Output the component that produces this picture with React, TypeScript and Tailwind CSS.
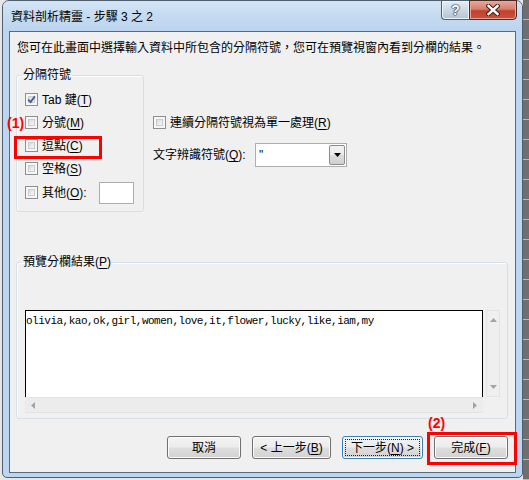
import React from "react";

function Box({ checked = false }: { checked?: boolean }) {
  return (
    <span className="relative flex h-[13px] w-[13px] shrink-0 border border-[#8e8f8f] bg-[#f6f6f6] p-[2px]">
      <span className="h-full w-full border border-[#c9cbcd] bg-gradient-to-br from-[#d9dadc] to-[#f8f8f8]" />
      {checked && (
        <svg className="absolute left-[1px] top-[1px]" width="9" height="9" viewBox="0 0 9 9">
          <path d="M1.2 4.6 L3.6 7 L7.9 1.4" fill="none" stroke="#4b5e9c" strokeWidth="1.9" />
        </svg>
      )}
    </span>
  );
}

function Mn({ text, k, tail = "" }: { text: string; k: string; tail?: string }) {
  return (
    <span>
      {text}(<span className="underline underline-offset-[2px]">{k}</span>){tail}
    </span>
  );
}

function Row({ children, className = "" }: { children: React.ReactNode; className?: string }) {
  return <div className={"relative flex h-[23px] items-center gap-[4px] " + className}>{children}</div>;
}

function Btn({ w, children, focus = false }: { w: string; children: React.ReactNode; focus?: boolean }) {
  return (
    <div
      className={
        "flex h-[23px] rounded-[3px] border bg-[linear-gradient(to_bottom,#f3f3f3_0%,#ececec_48%,#dedede_52%,#d2d2d2_100%)] shadow-[inset_0_0_0_1px_#fbfbfb] " +
        w +
        (focus ? " border-[#3c7fb1] shadow-[inset_0_0_0_1px_#9fe0f9,0_0_2px_#7fd0f5]" : " border-[#707070]")
      }
    >
      {focus ? (
        <div className="m-[2px] flex flex-1 items-center justify-center border border-dotted border-[#222]">{children}</div>
      ) : (
        <div className="flex flex-1 items-center justify-center">{children}</div>
      )}
    </div>
  );
}

export default function App() {
  return (
    <div className="flex h-[480px] w-[529px] overflow-hidden bg-[#e6e6e6] font-['Liberation_Sans','Noto_Sans_CJK_TC',sans-serif] text-[12px] leading-[16px] text-black">
      <div className="ml-[2px] flex h-[478px] w-[521px] shrink-0 flex-col rounded-t-[7px] rounded-b-[5px] border border-[#4f5f70] bg-[#bcd5f0]">
        {/* title bar */}
        <div className="flex h-[30px] shrink-0 rounded-t-[6px] bg-gradient-to-b from-[#d4e4f5] via-[#c5dbf1] to-[#bcd4ef] pl-[8px] pr-[5px]">
          <div className="self-center pt-[1px]">資料剖析精靈 - 步驟 3 之 2</div>
          <div className="-mt-[1px] ml-auto flex self-start">
            <div className="flex h-[20px] w-[28px] items-center justify-center rounded-bl-[4px] border border-r-0 border-[#4f5f70] bg-gradient-to-b from-[#e6eef7] via-[#ccd8e5] to-[#b3c4d6] shadow-[inset_0_0_0_1px_#eef4fa]">
              <span className="text-[14px] font-bold leading-[14px] text-white [text-shadow:0_0_1px_#1d2c3c,0_0_1px_#1d2c3c,0_0_2px_#1d2c3c]">?</span>
            </div>
            <div className="flex h-[20px] w-[48px] items-center justify-center rounded-br-[4px] border border-[#4a2a25] bg-[linear-gradient(to_bottom,#e7a89c_0%,#d5806f_45%,#c43f2c_55%,#c9533c_100%)] shadow-[inset_0_0_0_1px_#eaa597]">
              <svg width="14" height="12" viewBox="0 0 14 12">
                <path d="M2.5 2 L11.5 10 M11.5 2 L2.5 10" stroke="#3b1d18" strokeWidth="4.4" strokeLinecap="square" />
                <path d="M2.5 2 L11.5 10 M11.5 2 L2.5 10" stroke="#ffffff" strokeWidth="2.4" strokeLinecap="square" />
              </svg>
            </div>
          </div>
        </div>

        {/* client */}
        <div className="ml-[6px] flex h-[442px] w-[507px] flex-col border border-[#5b6a79] bg-[#f0f0f0]">
          <div className="pl-[7px] pt-[8px]">您可在此畫面中選擇輸入資料中所包含的分隔符號，您可在預覽視窗內看到分欄的結果。</div>

          <div className="ml-[6px] mt-[11px] flex">
            <fieldset className="w-[128px] rounded-[3px] border border-[#d5dfe5] shadow-[inset_1px_1px_0_#fff]">
              <legend className="ml-[5px] px-[1px]">分隔符號</legend>
              <div className="pb-[6px] pl-[8px] pt-[5px]">
                <Row>
                  <Box checked />
                  <Mn text="Tab 鍵" k="T" />
                </Row>
                <Row>
                  <span className="absolute left-[-18px] top-[4px] text-[14px] font-bold leading-[16px] text-[#ff0000]">(1)</span>
                  <Box />
                  <Mn text="分號" k="M" />
                </Row>
                <Row>
                  <span className="absolute left-[-11px] top-[2px] h-[23px] w-[88px] border-[3px] border-[#ff0000]" />
                  <Box />
                  <Mn text="逗點" k="C" />
                </Row>
                <Row>
                  <Box />
                  <Mn text="空格" k="S" />
                </Row>
                <div className="flex h-[25px] items-center gap-[4px]">
                  <Box />
                  <Mn text="其他" k="O" tail=":" />
                  <div className="ml-[8px] h-[22px] w-[35px] border border-[#abadb3] bg-white" />
                </div>
              </div>
            </fieldset>

            <div className="ml-[9px] flex flex-col">
              <Row className="mt-[44px]">
                <Box />
                <Mn text="連續分隔符號視為單一處理" k="R" />
              </Row>
              <div className="mt-[9px] flex h-[24px] items-center">
                <div className="w-[102px]">
                  <Mn text="文字辨識符號" k="Q" tail=":" />
                </div>
                <div className="flex h-[24px] w-[92px] items-center border border-[#abadb3] bg-white pl-[3px] pr-[1px]">
                  <span className="flex-1">"</span>
                  <div className="flex h-[20px] w-[16px] items-center justify-center rounded-[2px] border border-[#8c8c8c] bg-[linear-gradient(to_bottom,#f2f2f2_0%,#ebebeb_50%,#dddddd_50%,#cfcfcf_100%)]">
                    <svg width="7" height="4" viewBox="0 0 7 4">
                      <path d="M0 0 H7 L3.5 4 Z" fill="#000" />
                    </svg>
                  </div>
                </div>
              </div>
            </div>
          </div>

          <fieldset className="ml-[6px] mt-[42px] w-[492px] rounded-[3px] border border-[#d5dfe5] shadow-[inset_1px_1px_0_#fff]">
            <legend className="ml-[5px] px-[1px]">
              <Mn text="預覽分欄結果" k="P" />
            </legend>
            <div className="pb-[5px] pl-[8px] pt-[40px]">
              <div className="flex">
                <div className="h-[87px] w-[458px] border-l border-r border-t border-black bg-white pl-[0px] pt-[2px] font-['Liberation_Mono','DejaVu_Sans_Mono',monospace] text-[11px] tracking-[-0.5px]">
                  olivia,kao,ok,girl,women,love,it,flower,lucky,like,iam,my
                </div>
                <div className="ml-[3px] flex h-[87px] w-[14px] flex-col items-center justify-between border border-[#e4e4e4] bg-[#efefef] py-[7px]">
                  <svg width="7" height="4" viewBox="0 0 7 4">
                    <path d="M0 4 H7 L3.5 0 Z" fill="#a3a3a3" />
                  </svg>
                  <svg width="7" height="4" viewBox="0 0 7 4">
                    <path d="M0 0 H7 L3.5 4 Z" fill="#a3a3a3" />
                  </svg>
                </div>
              </div>
              <div className="flex h-[16px] w-[458px] items-center justify-between border-t border-[#e2e2e2] bg-[#ececec] px-[6px] shadow-[inset_0_-1px_0_#e3e3e3]">
                <svg width="4" height="7" viewBox="0 0 4 7">
                  <path d="M4 0 V7 L0 3.5 Z" fill="#a3a3a3" />
                </svg>
                <svg width="4" height="7" viewBox="0 0 4 7">
                  <path d="M0 0 V7 L4 3.5 Z" fill="#a3a3a3" />
                </svg>
              </div>
            </div>
          </fieldset>

          <div className="mt-[17px] flex justify-end gap-[11px] pr-[7px]">
            <Btn w="w-[74px]">取消</Btn>
            <Btn w="w-[79px]">
              <Mn text="< 上一步" k="B" />
            </Btn>
            <Btn w="w-[81px]" focus>
              <span>
                下一步(<span className="underline underline-offset-[2px]">N</span>) &gt;
              </span>
            </Btn>
            <div className="relative">
              <span className="absolute left-[-6px] top-[-21px] text-[14px] font-bold leading-[16px] text-[#ff0000]">(2)</span>
              <span className="absolute left-[-7px] top-[-4px] h-[33px] w-[90px] border-[3px] border-[#ff0000]" />
              <Btn w="w-[74px]">
                <Mn text="完成" k="F" />
              </Btn>
            </div>
          </div>
        </div>
      </div>
      <div className="h-full flex-1 bg-[repeating-linear-gradient(to_bottom,#6f6f6f_0px,#6f6f6f_19px,#b9b9b9_19px,#b9b9b9_20px)]" />
    </div>
  );
}
